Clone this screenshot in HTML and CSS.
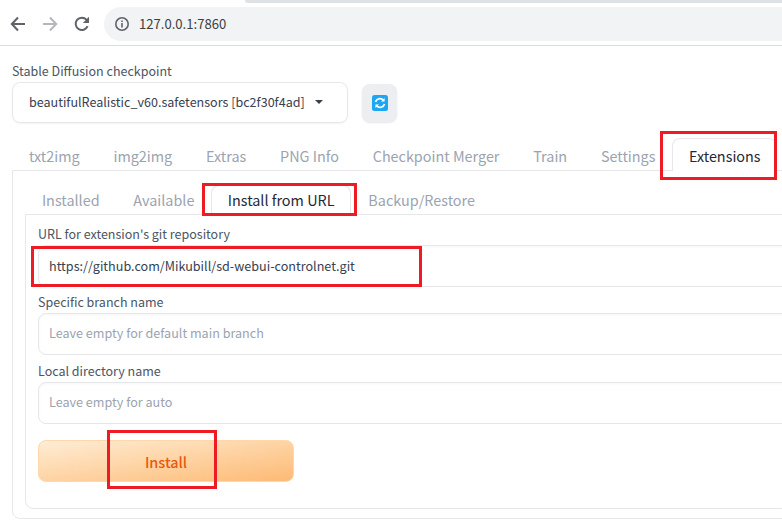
FILE: index.html
```html
<!DOCTYPE html>
<html lang="en">
<head>
<meta charset="utf-8">
<title>Extensions</title>
<link rel="stylesheet" href="styles.css">
</head>
<body>
<header class="chrome">
  <div class="tabstrip"></div>
  <div class="toolbar">
    <svg class="nav" width="18" height="18" viewBox="0 0 18 18"><path d="M16 9H3M9 2.5 2.8 9 9 15.5" fill="none" stroke="#5f6368" stroke-width="2"/></svg>
    <svg class="nav" width="18" height="18" viewBox="0 0 18 18"><path d="M2 9h13M9 2.5 15.2 9 9 15.5" fill="none" stroke="#b4b6b9" stroke-width="2"/></svg>
    <svg class="nav" width="18" height="18" viewBox="0 0 18 18"><path d="M14.6 11.2A6.2 6.2 0 1 1 13.4 4.6L15.5 6.5" fill="none" stroke="#5f6368" stroke-width="2"/><path d="M16 1.8V8h-6.2z" fill="#5f6368"/></svg>
    <div class="omnibox">
      <svg width="16" height="16" viewBox="0 0 16 16"><circle cx="8" cy="8" r="6.2" fill="none" stroke="#5f6368" stroke-width="1.6"/><path d="M8 7v4.4M8 4.4v1.5" stroke="#5f6368" stroke-width="1.6"/></svg>
      <span class="url">127.0.0.1:7860</span>
    </div>
  </div>
</header>
<main class="app">
  <section class="checkpoint">
    <div class="field-label">Stable Diffusion checkpoint</div>
    <div class="checkpoint-row">
      <div class="select"><span>beautifulRealistic_v60.safetensors [bc2f30f4ad]</span><i class="caret"></i></div>
      <button class="refresh" aria-label="Refresh">
        <svg width="16" height="16" viewBox="0 0 16 16"><rect width="16" height="16" rx="2.5" fill="#1da7f2"/><path d="M3.5 7A4.6 4.6 0 0 1 11.4 5.2M12.5 9A4.6 4.6 0 0 1 4.6 10.8" fill="none" stroke="#fff" stroke-width="1.7"/><path d="M12.6 3v3.6H9zM3.4 13V9.4H7z" fill="#fff"/></svg>
      </button>
    </div>
  </section>
  <nav class="tabs main-tabs">
    <span class="tab">txt2img</span><span class="tab">img2img</span><span class="tab">Extras</span><span class="tab">PNG Info</span><span class="tab">Checkpoint Merger</span><span class="tab">Train</span><span class="tab">Settings</span><span class="tab active">Extensions</span>
  </nav>
  <section class="panel">
    <nav class="tabs sub-tabs">
      <span class="tab">Installed</span><span class="tab">Available</span><span class="tab active">Install from URL</span><span class="tab">Backup/Restore</span>
    </nav>
    <div class="subpanel">
      <label class="field">
        <span class="field-label">URL for extension's git repository</span>
        <span class="input filled">https://github.com/Mikubill/sd-webui-controlnet.git</span>
      </label>
      <label class="field">
        <span class="field-label">Specific branch name</span>
        <span class="input">Leave empty for default main branch</span>
      </label>
      <label class="field">
        <span class="field-label">Local directory name</span>
        <span class="input">Leave empty for auto</span>
      </label>
      <button class="install">Install</button>
    </div>
  </section>
</main>
<div class="mark m-ext"></div>
<div class="mark m-url"></div>
<div class="mark m-repo"></div>
<div class="mark m-btn"></div>
</body>
</html>
```
FILE: styles.css
```css
* { box-sizing: border-box; }
html, body { margin: 0; height: 523px; overflow: hidden; }
body { background: #fff; font-family: "Noto Sans CJK SC", "Noto Sans", sans-serif; font-size: 14px; color: #374151; position: relative; }
.chrome { height: 46px; border-bottom: 1px solid #dadce0; position: relative; }
.tabstrip { position: absolute; left: 245px; right: 0; top: 0; height: 3px; background: #dee1e6; border-bottom-left-radius: 6px; }
.toolbar { display: flex; align-items: center; height: 48px; padding: 0 0 0 9px; }
.nav { margin-right: 14px; flex: none; }
.nav:nth-child(3) { margin-right: 13px; }
.omnibox { flex: 1; height: 34px; border-radius: 17px 0 0 17px; background: #f1f3f4; display: flex; align-items: center; padding-left: 10px; gap: 9px; }
.url { font-size: 13.1px; line-height: 18px; color: #3c4043; }
.app { padding: 17px 0 0 12px; }
.field-label { display: block; font-size: 12.5px; line-height: 16px; color: #4b5563; }
.checkpoint-row { display: flex; align-items: center; gap: 14px; margin-top: 3px; }
.select { width: 336px; height: 41px; border: 1px solid #e5e7eb; border-radius: 8px; box-shadow: 0 1px 2px rgba(0,0,0,.05); padding: 0 0 2px 16px; display: flex; align-items: center; font-size: 12.55px; color: #374151; white-space: nowrap; }
.caret { width: 0; height: 0; margin-left: 10px; border: 4px solid transparent; border-top: 4px solid #374151; border-bottom: 0; }
.refresh { width: 35px; height: 38px; border: 0; padding: 0; border-radius: 8px; background: #eceef1; display: flex; align-items: center; justify-content: center; box-shadow: 0 1px 2px rgba(0,0,0,.1); }
.tabs { display: flex; height: 33px; }
.tab { font-size: 14.4px; line-height: 20px; color: #9ca3af; white-space: nowrap; padding: 9px 16.9px 0; }
.tab.active { color: #1f2937; background: #fff; border: 1px solid #e5e7eb; border-bottom: 0; border-radius: 8px 8px 0 0; margin-top: 1px; padding: 7px 15px 0 15.6px; height: 33px; position: relative; z-index: 1; }
.main-tabs { margin-top: 14px; }
.sub-tabs .tab.active { margin-top: 4px; height: 30px; padding: 4px 16px 0 15.5px; }
.panel { width: 790px; height: 349px; border: 1px solid #e5e7eb; border-radius: 0 0 8px 8px; padding: 10px 12px 0; }
.subpanel { height: 295px; border: 1px solid #e5e7eb; border-radius: 0 0 8px 8px; padding: 11px 12px 0; }
.field { display: block; margin-bottom: 7px; }
.field + .field + .field { margin-top: 8px; }
.field .field-label { height: 19px; }
.input { display: flex; align-items: center; height: 42px; padding: 0 0 3px 10px; margin-right: -40px; border: 1px solid #e5e7eb; border-radius: 8px; box-shadow: inset 0 1px 3px rgba(0,0,0,.04); font-size: 12.6px; color: #9ca3af; }
.input.filled { color: #374151; padding-bottom: 2px; }
.install { display: block; width: 256px; height: 42px; margin-top: 16px; border: 1px solid #fed7aa; border-radius: 8px; background: linear-gradient(to bottom right, #ffedd5, #fdba74); color: #ea580c; font: 500 14.4px "Noto Sans CJK SC", sans-serif; }
.mark { position: absolute; z-index: 2; border: 3px solid #ed1c24; }
.m-ext { left: 660px; top: 131px; width: 117px; height: 49px; }
.m-url { left: 202px; top: 183px; width: 155px; height: 33px; }
.m-repo { left: 31px; top: 246px; width: 391px; height: 41px; }
.m-btn { left: 107px; top: 430px; width: 110px; height: 59px; }
```
